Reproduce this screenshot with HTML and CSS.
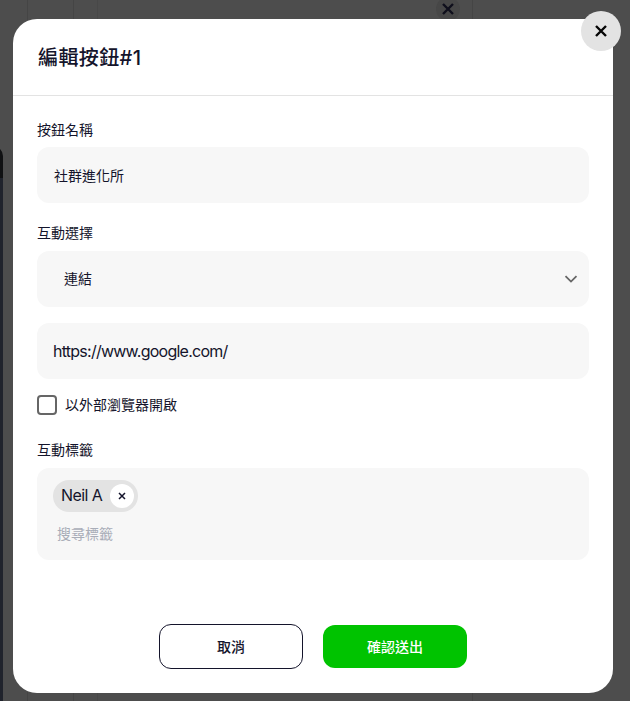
FILE: index.html
```html
<!DOCTYPE html>
<html>
<head>
  <title>編輯按鈕</title>
  <link rel="stylesheet" href="styles.css">
</head>
<body>

  <div class="backdrop-shape"></div>
  <div class="backdrop-close">
    <svg width="16" height="16" viewBox="0 0 16 16"><path d="M3 3l10 10M13 3L3 13" /></svg>
  </div>

  <div class="modal">
    <button class="close-btn">
      <svg width="16" height="16" viewBox="0 0 16 16"><path d="M3 3l10 10M13 3L3 13" /></svg>
    </button>

    <div class="modal-header">編輯按鈕#1</div>

    <div class="modal-body">
      <div class="label">按鈕名稱</div>
      <div class="field field-name">社群進化所</div>

      <div class="label label-gap">互動選擇</div>
      <div class="field field-select">
        <span>連結</span>
        <svg width="14" height="8" viewBox="0 0 14 8"><path d="M1.5 1.2L7 6.6l5.5-5.4" /></svg>
      </div>

      <div class="field field-url">https://www.google.com/</div>

      <div class="check-row">
        <span class="checkbox"></span>
        <span>以外部瀏覽器開啟</span>
      </div>

      <div class="label label-tags">互動標籤</div>
      <div class="tag-box">
        <div class="chip">
          <span>Neil A</span>
          <span class="chip-remove">
            <svg width="8" height="8" viewBox="0 0 8 8"><path d="M1 1l6 6M7 1L1 7" /></svg>
          </span>
        </div>
        <div class="tag-search">搜尋標籤</div>
      </div>
    </div>

    <div class="modal-footer">
      <button class="btn btn-cancel">取消</button>
      <button class="btn btn-submit">確認送出</button>
    </div>
  </div>

</body>
</html>
```

FILE: styles.css
```css
* {
  box-sizing: border-box;
}

html, body {
  height: 100%;
}

body {
  margin: 0;
  padding: 19px 0 0 13px;
  overflow: hidden;
  position: relative;
  font-family: Inter, "Noto Sans CJK TC", sans-serif;
  color: #14142b;
  background-color: #4d4d4d;
  background-image:
    linear-gradient(#454545, #454545),
    linear-gradient(#454545, #454545),
    linear-gradient(#484848, #484848),
    linear-gradient(#454545, #454545);
  background-size: 1px 100%;
  background-repeat: no-repeat;
  background-position: 27px 0, 73px 0, 97px 0, 472px 0;
}

.backdrop-shape {
  position: absolute;
  left: -20px;
  top: 146px;
  width: 23px;
  height: 560px;
  border-radius: 0 10px 0 0;
  background: linear-gradient(#101113 0, #101113 32px, #20232c 32px);
}

.backdrop-close {
  position: absolute;
  left: 436px;
  top: -3px;
  width: 24px;
  height: 24px;
  border-radius: 50%;
  background: #474747;
  display: flex;
  align-items: center;
  justify-content: center;
}

.backdrop-close path {
  stroke: #0f0f1c;
  stroke-width: 2.4;
  fill: none;
}

.modal {
  position: relative;
  width: 600px;
  height: 674px;
  background: white;
  border-radius: 24px;
}

.close-btn {
  position: absolute;
  right: -8px;
  top: -8px;
  width: 40px;
  height: 40px;
  padding: 0;
  border: none;
  border-radius: 50%;
  background: #e3e3e3;
  display: flex;
  align-items: center;
  justify-content: center;
}

.close-btn path {
  stroke: #050505;
  stroke-width: 2.4;
  fill: none;
}

.modal-header {
  height: 77px;
  padding: 25px 25px 0;
  font-size: 20px;
  font-weight: 500;
  line-height: 29px;
  letter-spacing: 0.4px;
  border-bottom: 1px solid #e3e3e3;
}

.modal-body {
  padding: 24px 24px 0;
}

.label {
  height: 20px;
  font-size: 14px;
  line-height: 20px;
  margin-bottom: 7px;
}

.label-gap {
  margin-top: 20px;
  margin-bottom: 8px;
}

.label-tags {
  margin-top: 25px;
  margin-bottom: 8px;
}

.field {
  height: 56px;
  background: #f7f7f7;
  border-radius: 12px;
  padding: 0 17px;
  display: flex;
  align-items: center;
  font-size: 14px;
}

.field-select {
  justify-content: space-between;
  padding: 0 11px 2px 27px;
}

.field-select svg {
  margin-top: 2px;
}

.field-select path {
  stroke: #666;
  stroke-width: 1.8;
  fill: none;
}

.field-url {
  margin-top: 16px;
  padding-left: 16px;
  font-size: 16px;
  letter-spacing: -0.75px;
}

.check-row {
  display: flex;
  align-items: center;
  gap: 8px;
  margin-top: 16px;
  padding-bottom: 2px;
  height: 20px;
  font-size: 14px;
}

.checkbox {
  width: 20px;
  height: 20px;
  margin-bottom: -2px;
  border: 2px solid #666;
  border-radius: 4px;
}

.tag-box {
  height: 92px;
  background: #f7f7f7;
  border-radius: 12px;
  padding: 12px 16px;
}

.chip {
  display: inline-flex;
  align-items: center;
  justify-content: space-between;
  width: 85px;
  height: 32px;
  padding: 0 4px 2px 8px;
  border-radius: 16px;
  background: #e3e3e3;
  font-size: 16px;
  letter-spacing: -0.6px;
}

.chip-remove {
  width: 24px;
  height: 24px;
  margin-bottom: -2px;
  border-radius: 50%;
  background: white;
  display: flex;
  align-items: center;
  justify-content: center;
}

.chip-remove path {
  stroke: #14142b;
  stroke-width: 1.5;
  fill: none;
}

.tag-search {
  margin-top: 12px;
  padding-left: 4px;
  font-size: 14px;
  line-height: 20px;
  color: #a9adb8;
}

.modal-footer {
  display: flex;
  justify-content: center;
  align-items: center;
  gap: 20px;
  margin-top: 64px;
  height: 45px;
}

.btn {
  width: 144px;
  font-family: inherit;
  font-size: 14px;
  font-weight: 500;
  padding: 0 0 2px;
}

.btn-cancel {
  height: 45px;
  background: white;
  color: #14142b;
  border: 1px solid #14142b;
  border-radius: 12px;
}

.btn-submit {
  height: 43px;
  background: #00c300;
  color: white;
  border: none;
  border-radius: 12px;
}
```
